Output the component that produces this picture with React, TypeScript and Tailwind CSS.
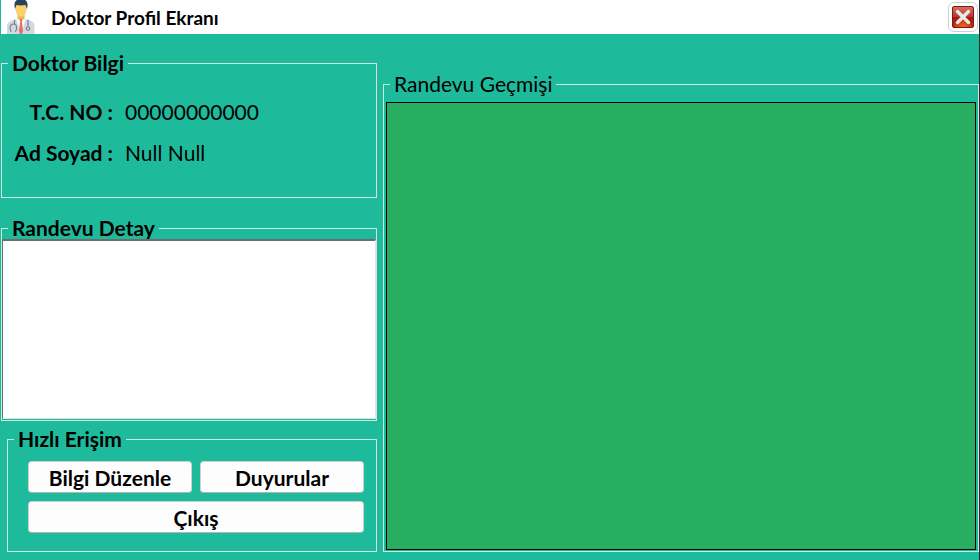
import type { ReactNode } from 'react';

function GroupBox({ title, bold = true, className = '', children }: { title: string; bold?: boolean; className?: string; children: ReactNode }) {
  return (
    <fieldset className={`flex min-w-0 flex-col border border-[#c8ebe2] border-r-[#dcdcdc] ${className}`}>
      <legend className={`ml-1.5 px-1 pb-0.5 text-[21px] leading-[19px] ${bold ? 'font-bold' : 'font-normal'}`}>{title}</legend>
      {children}
    </fieldset>
  );
}

function DoctorIcon() {
  return (
    <svg viewBox="0 0 28 34" className="h-[34px] w-7" aria-hidden="true">
      <path d="M0 34v-7c0-4 2-5.500 5-6.500l6-2.500h6l6 2.500c3 1 4.500 2.500 4.500 6.500v7z" fill="#d3d8dd" />
      <path d="M9 18.500 14 34l5-15.500-3-1.500h-4z" fill="#f7f8fa" />
      <path d="M10.500 13h7v5.500L14 21l-3.500-2.500z" fill="#f0b84e" />
      <path d="m12.700 19.500 1.300-.8 1.300.8-.5 2L16 31l-1 3h-2l-1-3 1.200-9.500z" fill="#ef6a5b" />
      <path d="M8.500 5c0-3 2-5 5.500-5s5.500 2 5.500 5v4c0 4-3 8-5.500 8s-5.500-4-5.500-8z" fill="#fdd06b" />
      <path d="M8 9C6.500 3 8-1 14-1s7.500 4 6 10l-1.500-4c-3 .5-6.500.5-9 0z" fill="#27405c" />
      <path d="M7.500 20v4M4.500 31.500H4c-2-3-1-7.500 2.500-7.500s4 4.500 2 7.500H8M21 20v6.500" fill="none" stroke="#6f8596" strokeWidth="1.200" />
      <circle cx="21" cy="28.500" r="1.700" fill="#dfe8ee" stroke="#6f8596" strokeWidth="1.200" />
    </svg>
  );
}

function CloseIcon() {
  return (
    <svg viewBox="0 0 24 24" className="size-6" aria-hidden="true">
      <defs>
        <linearGradient id="closeFill" x1="0" y1="0" x2="0" y2="1">
          <stop offset="0" stopColor="#d9705f" />
          <stop offset=".48" stopColor="#b93a2d" />
          <stop offset=".52" stopColor="#a3170e" />
          <stop offset="1" stopColor="#bf3010" />
        </linearGradient>
        <radialGradient id="closeGlow" cx=".5" cy="1" r=".5">
          <stop offset="0" stopColor="#f5681c" />
          <stop offset="1" stopColor="#f5681c" stopOpacity="0" />
        </radialGradient>
      </defs>
      <rect x="1.500" y="1.500" width="21" height="21" rx="1.500" fill="url(#closeFill)" stroke="#7d1a14" />
      <rect x="2" y="2" width="20" height="20" rx="1" fill="url(#closeGlow)" />
      <path d="m6.500 6.500 11 11m0-11-11 11" stroke="#e9e9e9" strokeWidth="3.400" strokeLinecap="round" />
    </svg>
  );
}

const buttonClass =
  'h-8 rounded border border-[#d0d0d0] border-b-[#b4b4b4] bg-[#fdfdfd] pt-0.5 text-[21px] leading-6 font-bold hover:bg-[#e8f4fc]';

export default function App() {
  return (
    <div className="flex min-h-screen flex-col border-r border-l border-r-[#262b2b] border-l-[#1dbb9c] bg-[#1dbb9c] font-[Lato,Carlito,sans-serif] text-black">
      <header className="flex h-[34px] items-center bg-white pl-1.5">
        <DoctorIcon />
        <h1 className="ml-4 flex-1 pt-0.5 text-[19px] leading-6 font-bold">Doktor Profil Ekranı</h1>
        <button type="button" aria-label="Kapat" className="mr-px flex size-[30px] items-center justify-center rounded-md border border-[#cfcfcf] bg-white">
          <CloseIcon />
        </button>
      </header>

      <main className="grid flex-1 grid-cols-[376fr_596fr] gap-x-1.5 pb-2">
        <div className="flex min-w-0 flex-col pt-[19px]">
          <GroupBox title="Doktor Bilgi">
            <dl className="mt-[25px] mb-[31px] grid grid-cols-[111px_1fr] gap-x-3 gap-y-[15px] text-[21px] leading-[26px]">
              <dt className="text-right font-bold">T.C. NO :</dt>
              <dd>00000000000</dd>
              <dt className="text-right font-bold">Ad Soyad :</dt>
              <dd>Null Null</dd>
            </dl>
          </GroupBox>

          <GroupBox title="Randevu Detay" className="mt-5 flex-1 pb-px">
            <textarea
              aria-label="Randevu Detay"
              className="block w-full flex-1 resize-none border-t-2 border-r border-b border-l border-t-[#6d6d6d] border-r-[#e3e3e3] border-b-[#e3e3e3] border-l-[#6d6d6d] bg-white p-1 text-[21px] outline-none"
            />
          </GroupBox>

          <GroupBox title="Hızlı Erişim" className="mt-2 ml-1.5">
            <div className="grid grid-cols-2 gap-2 pt-[11px] pr-3 pb-[18px] pl-5">
              <button type="button" className={buttonClass}>Bilgi Düzenle</button>
              <button type="button" className={buttonClass}>Duyurular</button>
              <button type="button" className={`col-span-2 ${buttonClass}`}>Çıkış</button>
            </div>
          </GroupBox>
        </div>

        <div className="flex min-w-0 flex-col pt-10">
          <GroupBox title="Randevu Geçmişi" bold={false} className="flex-1 pt-[7px] pb-px">
            <section aria-label="Randevu Geçmişi" className="mx-0.5 flex-1 border border-black bg-[#28ae61]" />
          </GroupBox>
        </div>
      </main>
    </div>
  );
}
